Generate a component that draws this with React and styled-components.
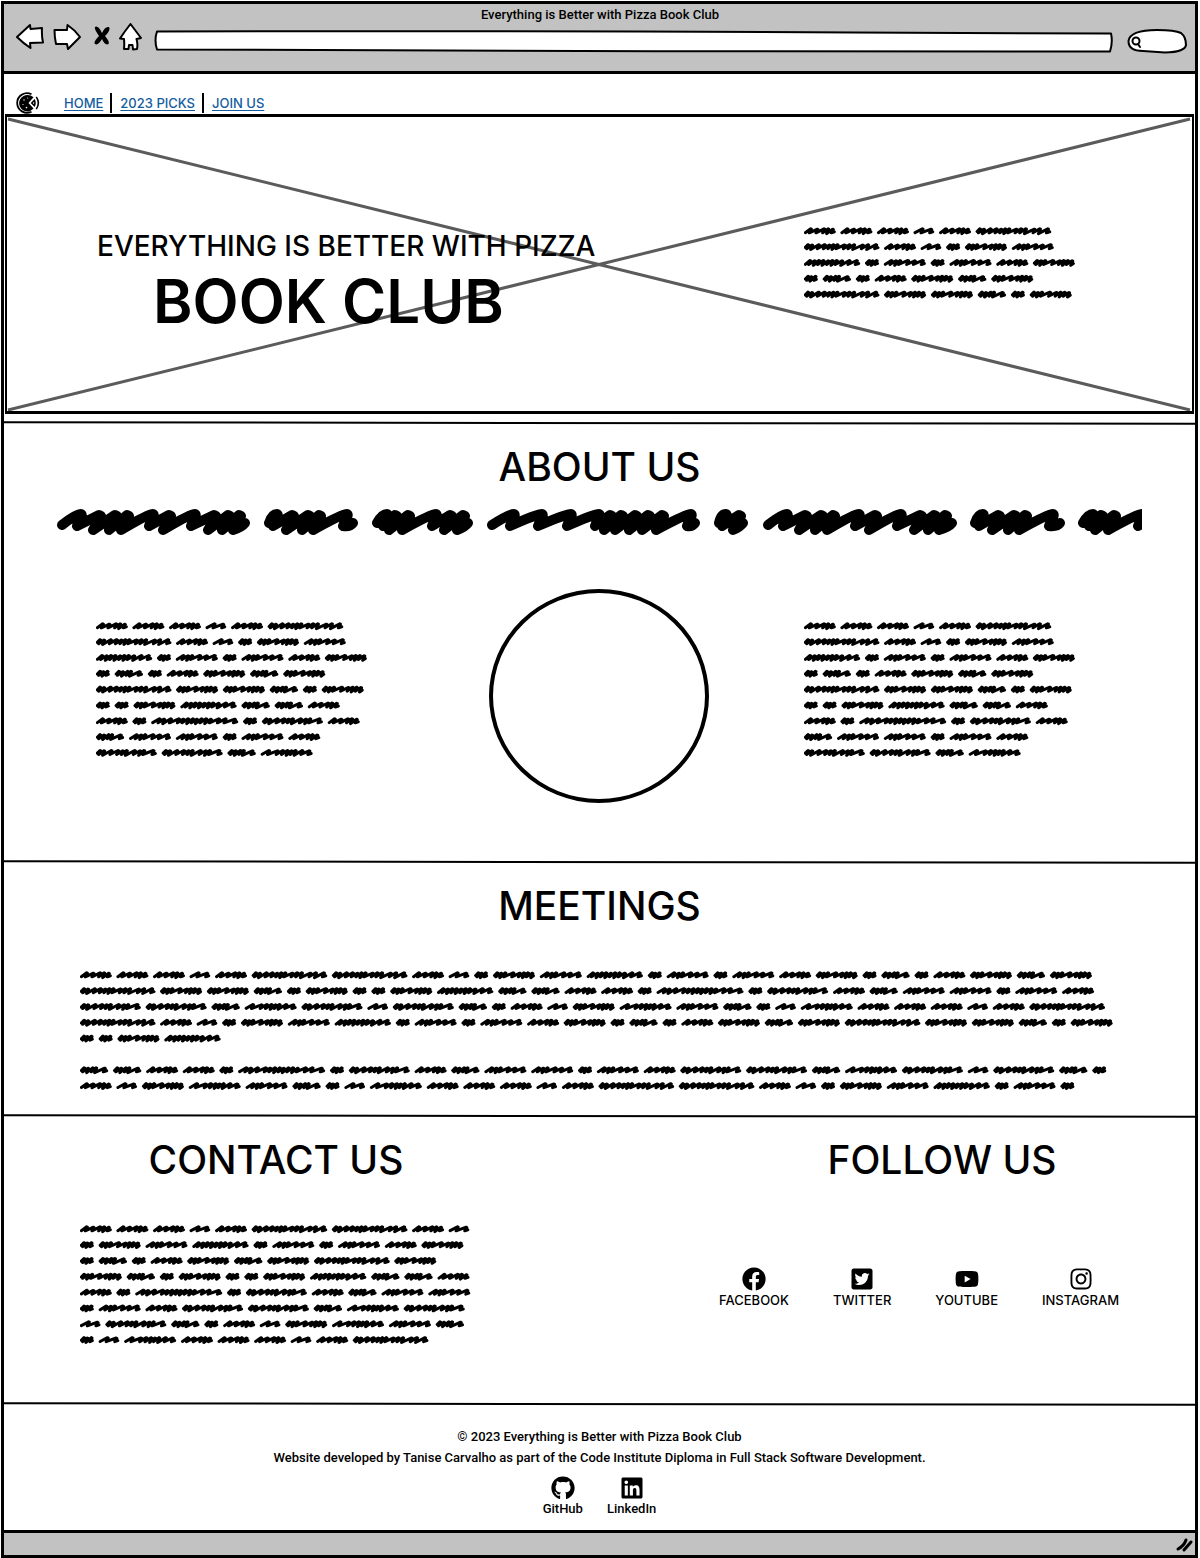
import React from "react";
import styled, { createGlobalStyle } from "styled-components";
import {
  FaFacebook,
  FaTwitterSquare,
  FaYoutube,
  FaInstagram,
  FaGithub,
  FaLinkedin,
} from "react-icons/fa";

const GlobalStyle = createGlobalStyle`
  * { box-sizing: border-box; }
  body {
    margin: 0;
    background: #fff;
    color: #000;
    font-family: Inter, "Open Sans", sans-serif;
    font-size: 13px;
    font-weight: 500;
  }
  h1, h2, p, ul { margin: 0; padding: 0; }
  ul { list-style: none; }
  svg { display: block; }
`;

const Frame = styled.div`
  margin: 1px 2px 1px 1px;
  border: 3px solid #000;
`;

const Toolbar = styled.header`
  background: #c2c2c2;
  border-bottom: 3px solid #000;
  padding: 2px 7px 16px 12px;
`;

const WindowTitle = styled.div`
  font-family: Roboto, sans-serif;
  line-height: 17px;
  text-align: center;
  padding-right: 4px;
`;

const Controls = styled.div`
  display: flex;
  align-items: flex-start;
`;

const ToolButton = styled.button`
  width: ${(p) => p.$width}px;
  height: 30px;
  margin-right: ${(p) => p.$gap}px;
  padding: 0;
  border: 0;
  background: none;
`;

const Field = styled.label`
  position: relative;
  height: 32px;
  flex: ${(p) => (p.$width ? `0 0 ${p.$width}px` : "1 1 0")};
  margin-right: ${(p) => p.$gap || 0}px;

  > svg {
    position: absolute;
    inset: 0;
    width: 100%;
    height: 100%;
    overflow: visible;
  }
`;

const FieldInput = styled.input`
  position: relative;
  width: 100%;
  height: 32px;
  padding: 8px 8px 4px ${(p) => p.$indent}px;
  border: 0;
  outline: 0;
  background: transparent;
  font: inherit;
`;

const Nav = styled.nav`
  display: flex;
  align-items: center;
  gap: 16px;
  height: 40px;
  padding: 17px 12px 0;
`;

const NavList = styled.ul`
  display: flex;
`;

const NavItem = styled.li`
  padding: 0 7px 0 8px;
  line-height: 20px;
  border-right: ${(p) => (p.$last ? "0" : "2px solid #000")};
`;

const NavLink = styled.a`
  color: #145ca0;
  text-decoration: underline;
  text-underline-offset: 2px;
`;

const Hero = styled.section`
  position: relative;
  display: flex;
  justify-content: space-between;
  align-items: flex-start;
  min-height: 300px;
  margin: 0 1px 7px;
  padding: 106px 116px 0 90px;
  border: solid #000;
  border-width: 3px 2px;
`;

const Crossed = styled.svg`
  position: absolute;
  inset: 0;
  width: 100%;
  height: 100%;
`;

const HeroTitle = styled.h1`
  position: relative;
  padding-top: 4px;
  font-weight: 500;
`;

const HeroLead = styled.span`
  display: block;
  font-size: 28px;
  line-height: 38px;
`;

const HeroName = styled.span`
  display: block;
  padding-left: 56px;
  font-size: 60px;
  line-height: 72px;
  font-weight: 600;
`;

const Section = styled.section`
  min-height: ${(p) => p.$min}px;
  padding-top: 18px;
`;

const Heading = styled.h2`
  font-size: 39px;
  line-height: 48px;
  font-weight: 500;
  text-align: center;
`;

const Banner = styled.div`
  margin: 16px 53px 0;
  overflow: hidden;
`;

const AboutGrid = styled.div`
  display: grid;
  grid-template-columns: 1fr 220px 1fr;
  margin-top: 52px;
  padding-right: 2px;
`;

const AboutText = styled.div`
  padding: 29px 0 0 ${(p) => p.$indent}px;
`;

const Portrait = styled.div`
  height: 214px;
  border: 4px solid #000;
  border-radius: 50%;
`;

const MeetingsText = styled.div`
  margin: 37px 76px 0;
  overflow: hidden;
`;

const Split = styled.section`
  display: flex;
  justify-content: space-between;
  min-height: 284px;
  padding: 18px 30px 0 76px;
`;

const ContactText = styled.div`
  margin-top: 37px;
`;

const FollowColumn = styled.div`
  width: 446px;
`;

const IconList = styled.ul`
  display: flex;
  gap: ${(p) => p.$gap}px;
  margin-top: ${(p) => p.$top}px;
  justify-content: ${(p) => (p.$center ? "center" : "flex-start")};
`;

const IconLink = styled.a`
  display: flex;
  flex-direction: column;
  align-items: center;
  color: #000;
  line-height: 18px;
  text-decoration: none;

  svg {
    width: 24px;
    height: 24px;
  }
`;

const Footer = styled.footer`
  min-height: 124px;
  padding: 20px 0 0;
  font-family: Roboto, sans-serif;
  line-height: 21px;
  text-align: center;
`;

const StatusBar = styled.div`
  display: flex;
  justify-content: flex-end;
  height: 25px;
  background: #c2c2c2;
  border-top: 3px solid #000;
`;

const RuleLine = styled.svg`
  width: 100%;
  height: 4px;
`;

const Rule = () => (
  <RuleLine viewBox="0 0 1192 4" preserveAspectRatio="none" aria-hidden="true">
    <path d="M0 1.2 C300 .8 700 2.6 1192 2.8" stroke="#000" strokeWidth="2" fill="none" />
  </RuleLine>
);

/* Greeked words: total width, heavy start or not, and the crests of the pen stroke, in thirds of a pixel. */
const WORDS = {
  A: [95, 0, [22, 42, 62, 74, 88]],
  B: [41, 1, [14, 24, 36]],
  C: [84, 1, [14, 26, 40, 50, 76]],
  D: [61, 0, [28, 54]],
  E: [125, 1, [14, 26, 38, 62, 82, 94, 106, 119]],
  F: [125, 0, [24, 38, 50, 74, 94, 118]],
  G: [168, 0, [20, 34, 47, 60, 74, 87, 100, 116, 138, 160]],
  H: [226, 1, [14, 26, 46, 64, 78, 90, 102, 124, 138, 152, 178, 194, 218]],
  I: [260, 0, [26, 40, 60, 84, 98, 112, 126, 138, 152, 166, 180, 204, 224, 252]],
  J: [182, 1, [14, 26, 48, 68, 82, 94, 118, 134, 146, 174]],
  K: [155, 0, [26, 52, 68, 82, 94, 106, 126, 147]],
};

const wordPath = ([width, thick, crests], x, y, k) => {
  let d = `M${x + 4 * k} ${y + (thick ? 1.5 : 5) * k}`;
  crests.forEach((c, i) => {
    const tight = i > 0 && c - crests[i - 1] < 17;
    const px = x + c * k;
    const high = y - (i % 3 === 1 ? 5.5 : 6.5) * k;
    const low = y + (tight && i % 2 ? 8 : 5.5) * k;
    d += `L${px - 2 * k} ${high}L${px} ${high + k}L${px - 6 * k} ${low}`;
  });
  return `${d}L${x + (width - 4) * k} ${y + 2.5 * k}`;
};

const LINE = 15.83;

function Greeking({ lines, width }) {
  let d = "";
  lines.forEach((line, row) => {
    let x = 0;
    for (const letter of line) {
      const word = WORDS[letter];
      d += wordPath(word, x, 8 + row * LINE, 1 / 3);
      x += (word[0] + 15.5 - (letter === "A" || letter === "H" ? 0.8 : 0)) / 3;
    }
  });
  return (
    <svg width={width} height={Math.ceil(lines.length * LINE)} aria-hidden="true">
      <path
        d={d}
        fill="none"
        stroke="#000"
        strokeWidth="3"
        strokeLinecap="round"
        strokeLinejoin="round"
      />
    </svg>
  );
}

/* Large lettering: start, end and crests in pixels. */
const LONG = [25, 44, 60, 72, 97, 114, 139, 159, 173, 184];
const MID = [14, 30, 46, 57, 84];
const MIXED = [16, 25, 38, 65, 80, 93];
const BANNER_WORDS = [
  [0, 193, LONG, 0],
  [207, 94, MID, 1],
  [315, 101, MIXED, 1],
  [430, 213, [28, 56, 85, 113, 125, 136, 150, 163, 177, 205], 0],
  [657, 34, [13, 27], 1],
  [706, 194, LONG, 0],
  [913, 95, MID, 1],
  [1021, 101, MIXED, 1],
];

const bannerPath = ([x, width, crests, thick]) => {
  let d = `M${x + 5} ${thick ? 16 : 18}`;
  let last = 0;
  crests.forEach((c) => {
    const tight = last > 0 && c - last < 21;
    const px = x + c;
    d += tight
      ? `L${px - 2} 8L${px} 9L${px - 5} 18L${px - 8} 23`
      : `Q${px - 6} 7 ${px - 1} 7Q${px + 1} 8 ${px - 3} 14L${px - 5} 19`;
    last = c;
  });
  return `${d}Q${x + width - 8} 20 ${x + width - 5} 16`;
};

const BannerScribble = () => (
  <svg width="1085" height="30" aria-hidden="true">
    <path
      d={BANNER_WORDS.map(bannerPath).join("")}
      fill="none"
      stroke="#000"
      strokeWidth="10"
      strokeLinecap="round"
      strokeLinejoin="round"
    />
  </svg>
);

const SIDE = [
  "AAADAH",
  "HADBEF",
  "GBFBFAE",
  "BCBAECE",
  "HEECBE",
  "BBEGCCA",
  "ABIBJA",
  "CFFBFA",
  "JJCK",
];

const MEETINGS = [
  "AAADAHHADBEFGBFBFAEBCBAECE",
  "HEECBEBBEGCCAABIBJACFFBFA",
  "JJCKJDJCBADEKFCBDKAAADAH",
  "HADBEFGBFBFAEBCBAECEHEECBE",
  "BBEG",
  "",
  "CCAABIBJACFFBFAJJCKJDJCB",
  "ADEKFCBDKAAADAHHADBEFGBFB",
];

const CONTACT = [
  "AAADAHHAD",
  "BEFGBFBFAE",
  "BCBAECEHE",
  "ECBEBBEGCCA",
  "ABIBJACFF",
  "BFAJJCKJ",
  "DJCBADEKFC",
  "BDKAAADAH",
];

const ink = {
  fill: "#fff",
  stroke: "#000",
  strokeWidth: 2,
  strokeLinejoin: "round",
  strokeLinecap: "round",
};

const PizzaLogo = () => (
  <svg width="24" height="22" viewBox="0 0 24 22" aria-hidden="true">
    <path d="M15.5 2.3A9.8 9.8 0 1 0 15.5 19.7" fill="none" stroke="#000" strokeWidth="1.8" />
    <path d="M11.5 3A9 9 0 0 1 17.500 5.200L12.500 11L17.500 16.600A8.200 8.200 0 1 1 11.500 3Z" />
    <path d="M14.7 11L18.6 7Q21 11 18.6 15Z" />
    <path d="M20.3 4.9Q24.4 11 20.3 17.1" fill="none" stroke="#000" strokeWidth="1.6" />
    <g fill="#fff">
      <circle cx="8" cy="8" r=".7" />
      <circle cx="11.7" cy="6" r=".6" />
      <circle cx="7" cy="12.5" r=".6" />
      <circle cx="10.5" cy="15.6" r=".8" />
      <circle cx="17.6" cy="11" r=".7" />
    </g>
  </svg>
);

const SOCIAL = [
  ["FACEBOOK", FaFacebook],
  ["TWITTER", FaTwitterSquare],
  ["YOUTUBE", FaYoutube],
  ["INSTAGRAM", FaInstagram],
];

const CREDITS = [
  ["GitHub", FaGithub],
  ["LinkedIn", FaLinkedin],
];

function IconLinks({ items, ...rest }) {
  return (
    <IconList {...rest}>
      {items.map(([name, Icon]) => (
        <li key={name}>
          <IconLink href="#">
            <Icon aria-hidden="true" />
            {name}
          </IconLink>
        </li>
      ))}
    </IconList>
  );
}

export default function App() {
  return (
    <>
      <GlobalStyle />
      <Frame>
        <Toolbar>
          <WindowTitle>Everything is Better with Pizza Book Club</WindowTitle>
          <Controls>
            <ToolButton $width={28} $gap={9} aria-label="Back">
              <svg width="28" height="30">
                <path {...ink} d="M1 14L14 2L14.5 6L26 5Q25.500 13 27 19.500L14 20L14.500 25Q7 20 1 14Z" />
              </svg>
            </ToolButton>
            <ToolButton $width={28} $gap={13} aria-label="Forward">
              <svg width="28" height="30">
                <path {...ink} d="M1.500 7L14 7L14.500 2Q22 7 27 14L15 26L14 21L3 21Q1.500 14 1.500 7Z" />
              </svg>
            </ToolButton>
            <ToolButton $width={16} $gap={9} aria-label="Stop">
              <svg width="16" height="30">
                <path d="M1 4Q4 2 8 10Q11 3 15 4Q17 7 11 13Q16 19 14.500 21Q11 23 8 16Q4 23 1 21Q-1 19 5 13Q0 6 1 4Z" />
              </svg>
            </ToolButton>
            <ToolButton $width={23} $gap={12} aria-label="Home">
              <svg width="23" height="30">
                <path {...ink} d="M11.500 1L22 15L17.500 16Q19 21 18 26L14 26.500L13.500 22L10 22L9.500 26L5 26Q5.500 21 5 16L1 15.500Q6 8 11.500 1Z" />
              </svg>
            </ToolButton>
            <Field $gap={13}>
              <svg viewBox="0 0 960 32" preserveAspectRatio="none" aria-hidden="true">
                <path {...ink} d="M3 8.500Q400 7.500 700 9.500L957 10.500Q959 19 956 28.500L500 28.200L3 26.500Q0 17 3 8.500Z" />
              </svg>
              <FieldInput $indent={10} type="text" aria-label="Address" />
            </Field>
            <Field $width={61}>
              <svg viewBox="0 0 61 32" aria-hidden="true">
                <path {...ink} d="M1.500 18Q3 7 30 7Q48 7 54 10Q59 14 59 22Q58 29 38 29.500L16 28Q1.500 28 1.500 18Z" />
                <circle cx="9" cy="18" r="3.500" {...ink} />
                <path {...ink} d="M11 21L13 24" />
              </svg>
              <FieldInput $indent={18} type="search" aria-label="Search" />
            </Field>
          </Controls>
        </Toolbar>

        <Nav>
          <PizzaLogo />
          <NavList>
            <NavItem><NavLink href="#">HOME</NavLink></NavItem>
            <NavItem><NavLink href="#">2023 PICKS</NavLink></NavItem>
            <NavItem $last><NavLink href="#">JOIN US</NavLink></NavItem>
          </NavList>
        </Nav>

        <Hero>
          <Crossed viewBox="0 0 1184 294" preserveAspectRatio="none" aria-hidden="true">
            <path d="M1 2L1182 293M1 293L1182 2" stroke="#5b5b5b" strokeWidth="3" />
          </Crossed>
          <HeroTitle>
            <HeroLead>EVERYTHING IS BETTER WITH PIZZA</HeroLead>
            <HeroName>BOOK CLUB</HeroName>
          </HeroTitle>
          <Greeking lines={SIDE.slice(0, 5)} width={272} />
        </Hero>
        <Rule />

        <Section $min={435}>
          <Heading>ABOUT US</Heading>
          <Banner><BannerScribble /></Banner>
          <AboutGrid>
            <AboutText $indent={92}><Greeking lines={SIDE} width={272} /></AboutText>
            <Portrait />
            <AboutText $indent={95}><Greeking lines={SIDE} width={272} /></AboutText>
          </AboutGrid>
        </Section>
        <Rule />

        <Section $min={250}>
          <Heading>MEETINGS</Heading>
          <MeetingsText><Greeking lines={MEETINGS} width={1040} /></MeetingsText>
        </Section>
        <Rule />

        <Split>
          <div>
            <Heading>CONTACT US</Heading>
            <ContactText><Greeking lines={CONTACT} width={392} /></ContactText>
          </div>
          <FollowColumn>
            <Heading>FOLLOW US</Heading>
            <IconLinks items={SOCIAL} $gap={44} $top={83} />
          </FollowColumn>
        </Split>
        <Rule />

        <Footer>
          <p>© 2023 Everything is Better with Pizza Book Club</p>
          <p>
            Website developed by Tanise Carvalho as part of the Code Institute Diploma in Full
            Stack Software Development.
          </p>
          <IconLinks items={CREDITS} $gap={24} $top={8} $center />
        </Footer>
        <StatusBar>
          <svg width="20" height="21" aria-hidden="true">
            <path
              d="M3 16Q9 13 11 7M9 17L16 9"
              fill="none"
              stroke="#000"
              strokeWidth="3"
              strokeLinecap="round"
            />
          </svg>
        </StatusBar>
      </Frame>
    </>
  );
}
